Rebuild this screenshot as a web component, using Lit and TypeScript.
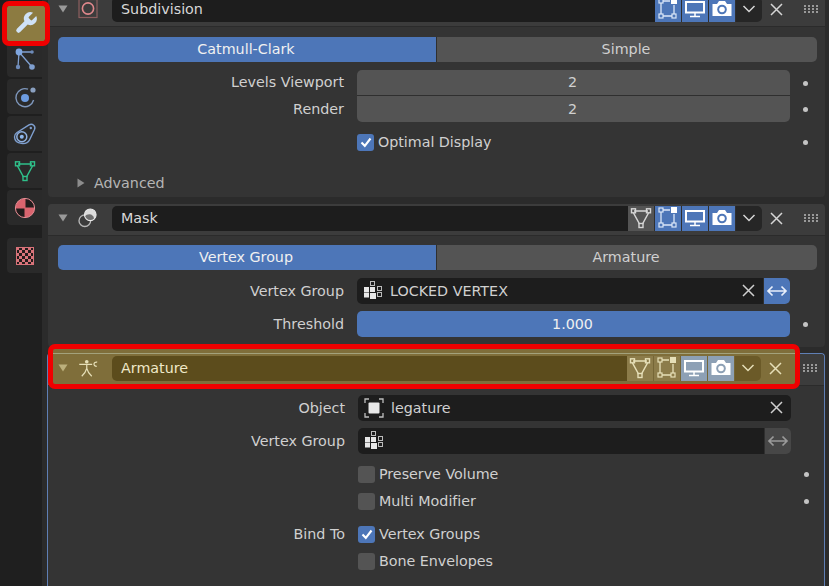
import { LitElement, html, css, svg } from "lit";
import { customElement } from "lit/decorators.js";

const ic = (w: number, h: number, c: any, cls = "") =>
  html`<svg class=${cls} width=${w} height=${h} viewBox="0 0 ${w} ${h}" fill="none">${c}</svg>`;

const wrench = html`<svg width="26" height="26" viewBox="0 0 24 24"><path fill="#cfe2f7" d="M14.7 6.3a1 1 0 0 0 0 1.4l1.6 1.6a1 1 0 0 0 1.4 0l3.77-3.77a6 6 0 0 1-7.94 7.94l-6.91 6.91a2.12 2.12 0 0 1-3-3l6.91-6.91a6 6 0 0 1 7.94-7.94l-3.76 3.76z"/></svg>`;
const particles = ic(24, 24, svg`<g stroke="#7f9fcf" stroke-width="1.3"><path d="M6 4 L19 4 M6 4 L5 19 M6 4 L19 19"/></g><circle cx="6" cy="4" r="3.4" fill="#7fa6de"/><circle cx="19" cy="4" r="1.8" fill="#6d8ab8"/><circle cx="5" cy="19" r="2.2" fill="#6d8ab8"/><circle cx="19" cy="19" r="2.8" fill="#7f9fcf"/>`);
const physics = ic(24, 24, svg`<path d="M15 4.2 A9 9 0 1 0 20.6 15" stroke="#7f98bd" stroke-width="1.4"/><circle cx="12" cy="13" r="4" fill="#6d9ce0"/><circle cx="20" cy="5" r="2.6" fill="#8aa0c0"/>`);
const constraint = ic(24, 24, svg`<path d="M4 10.5 L16 2.8 C19.5 1 23 4 21.5 7.5 L16.5 18 C14 23 2 23 1.5 15 C1.4 13 2.5 11.5 4 10.5 Z" stroke="#7fa0d0" stroke-width="1.4"/><circle cx="8.8" cy="14.8" r="5" stroke="#8fb0e0" stroke-width="1.5"/><circle cx="8.8" cy="14.8" r="2" fill="#8fb8ee"/><circle cx="17.8" cy="6" r="1.2" fill="#7f9fcf"/>`);
const dataTri = (col: string) => ic(22, 22, svg`<path d="M4 4 L18 4 M3.5 6 L9.5 17 M18.5 6 L12.5 17" stroke=${col} stroke-width="1.5"/><rect x="1.5" y="1.8" width="4" height="4" stroke=${col} stroke-width="1.4"/><rect x="16.5" y="1.8" width="4" height="4" stroke=${col} stroke-width="1.4"/><rect x="9" y="16.5" width="4" height="4" stroke=${col} stroke-width="1.4"/>`);
const material = ic(22, 22, svg`<circle cx="11" cy="11" r="9.6" fill="#d9646e"/><path d="M11.5 10.5 V1.6 A9.4 9.4 0 0 1 20.4 10.5 Z" fill="#211c1c"/><path d="M10.5 11.5 V20.4 A9.4 9.4 0 0 1 1.6 11.5 Z" fill="#211c1c"/><circle cx="11" cy="11" r="9.6" stroke="#e58d94" stroke-width="1"/>`);
const checker = () => {
  const cells = [];
  for (let y = 0; y < 6; y++) for (let x = 0; x < 6; x++) {
    cells.push(svg`<rect x=${x * 3} y=${y * 3} width="3" height="3" fill=${(x + y) % 2 ? "#241c1c" : "#d9737a"}/>`);
  }
  return ic(18, 18, svg`${cells}<rect x="0.5" y="0.5" width="17" height="17" stroke="#d9737a"/>`);
};
const subIcon = ic(20, 20, svg`<rect x="1" y="0.5" width="18" height="18" stroke="#8d5f5f" stroke-width="1.2"/><circle cx="10" cy="9.5" r="5.6" stroke="#e0888c" stroke-width="1.6"/>`);
const maskIcon = ic(22, 22, svg`<circle cx="7.5" cy="14" r="6.4" stroke="#b8b8b8" stroke-width="1.5"/><circle cx="13.5" cy="7.5" r="6.4" fill="#dcdcdc"/><path d="M7.4 9.2 A6.4 6.4 0 0 0 18 12 A7 7 0 0 0 14.5 7.2 A7 7 0 0 0 7.4 9.2 Z" fill="#6e6e6e"/><circle cx="13.5" cy="7.5" r="6.4" stroke="#e8e8e8" stroke-width="1.2"/>`);
const armIcon = (c: string) => ic(24, 24, svg`<circle cx="10.5" cy="4.5" r="2.2" fill=${c}/><path d="M1.5 7.5 H17 M10.5 7.5 V12.5 M10.5 12.5 Q9 18 4.5 22 M10.5 12.5 Q12 18 16.5 22" stroke=${c} stroke-width="1.5"/><path d="M23 5 C18.5 4.2 17.5 9.8 22.5 10" stroke=${c} stroke-width="1.4"/>`);
const vertsEdit = (c: string, sq: string) => ic(22, 22, svg`<path d="M4 5 V16 M6 3 H13 M6 18 H15 M17 7 V16" stroke=${c} stroke-width="1.3"/><rect x="2" y="1" width="4" height="4" stroke=${c} stroke-width="1.2"/><rect x="2" y="16" width="4" height="4" stroke=${c} stroke-width="1.2"/><rect x="15" y="16" width="4" height="4" stroke=${c} stroke-width="1.2"/><rect x="14" y="0" width="6" height="6" fill=${sq}/>`);
const monitor = (c: string) => ic(22, 20, svg`<rect x="2" y="3" width="18" height="10.5" stroke=${c} stroke-width="2" /><path d="M11 14 V17 M6 17.5 H16" stroke=${c} stroke-width="1.5"/>`);
const camera = (c: string, lens: string) => ic(22, 20, svg`<path d="M1.5 5 H6 L8 2 H14 L16 5 H20.5 V17 H1.5 Z" fill=${c}/><circle cx="11" cy="10.5" r="4.8" fill=${lens}/><circle cx="11" cy="10.5" r="2.8" fill=${c}/>`);
const chev = (c: string) => ic(14, 10, svg`<path d="M1.5 2 L7 7.5 L12.5 2" stroke=${c} stroke-width="1.5"/>`);
const cross = (c: string, s = 13) => ic(s, s, svg`<path d="M1 1 L${s - 1} ${s - 1} M${s - 1} 1 L1 ${s - 1}" stroke=${c} stroke-width="1.5"/>`);
const grip = () => {
  const d = [];
  for (let y = 0; y < 3; y++) for (let x = 0; x < 4; x++) d.push(svg`<rect x=${x * 4} y=${y * 3} width="2" height="2" fill="#9a9a9a"/>`);
  return ic(14, 8, d);
};
const vg = ic(20, 20, svg`<rect x="1" y="6" width="5" height="5" fill="#e8e8e8"/><rect x="1" y="11.5" width="5" height="5" fill="#e8e8e8"/><rect x="7.5" y="0.5" width="4" height="4" stroke="#bbb"/><rect x="7" y="6" width="5" height="5" fill="#e8e8e8"/><rect x="7" y="12" width="6" height="6" fill="#e8e8e8"/><rect x="14.5" y="5.5" width="4" height="4" stroke="#bbb"/><rect x="14.5" y="11.5" width="4" height="4" stroke="#bbb"/>`);
const objIcon = ic(20, 20, svg`<path d="M1 5 V1 H5 M15 1 H19 V5 M19 15 V19 H15 M5 19 H1 V15" stroke="#bdbdbd" stroke-width="1.3"/><rect x="4.5" y="4.5" width="11" height="11" rx="1" fill="#e8e8e8"/>`);
const swap = (c: string) => ic(22, 12, svg`<path d="M2 6 H20 M6.5 1.5 L2 6 L6.5 10.5 M15.5 1.5 L20 6 L15.5 10.5" stroke=${c} stroke-width="1.7"/>`);
const tri = (c: string) => ic(10, 10, svg`<path d="M0.5 1.5 H9.5 L5 8.5 Z" fill=${c}/>`);
const triR = ic(10, 10, svg`<path d="M1.5 0.5 V9.5 L8.5 5 Z" fill="#8c8c8c"/>`);
const tick = ic(12, 12, svg`<path d="M1.5 6.5 L4.8 9.8 L10.5 2.5" stroke="#fff" stroke-width="2.1"/>`);

@customElement("app-root")
export class AppRoot extends LitElement {
  static styles = css`
    :host { display: block; width: 829px; height: 586px; overflow: hidden; position: relative; background: #2b2b2b;
      font-family: "DejaVu Sans", sans-serif; font-size: 14.3px; color: #d0d0d0; }
    * { box-sizing: border-box; }
    .root { display: flex; height: 586px; }
    .side { width: 42px; flex: none; background: #1f1f1f; padding: 5px 0 0 7px; display: flex; flex-direction: column; gap: 2px; }
    .tab { height: 35px; background: #2a2a2a; border-radius: 4px 0 0 4px; display: flex; align-items: center; justify-content: center; flex: none; }
    .tab.on { height: 37px; margin-bottom: -2px; padding-bottom: 1px; background: #8c7b41; width: 38px; border-radius: 3px; }
    .tab.last { margin-top: 11px; }
    .main { flex: 1; min-width: 0; padding: 0 4px 0 6px; margin-top: -5px; display: flex; flex-direction: column; gap: 7px; }
    .panel { background: #343434; border-radius: 4px; flex: none; }
    .panel.p1 { height: 202px; }
    .panel.p2 { height: 143px; margin-bottom: -1px; }
    .panel.p3 { flex: 1; margin-left: -1px; margin-bottom: -5px; border: 1px solid #5f7fb5; border-bottom: 0; }
    .head { height: 32px; padding: 2px 0 5px 0; background: #3c3c3c; border-bottom: 1px solid #2b2b2b; border-radius: 4px 4px 0 0; display: flex; align-items: center; position: relative; }
    .arrow { width: 30px; display: flex; justify-content: center; flex: none; }
    .hicon { width: 20px; margin-right: 14px; flex: none; display: flex; justify-content: center; }
    .name { flex: 1; min-width: 0; height: 25px; background: #1d1d1d; border-radius: 5px 0 0 5px; padding-left: 9px; line-height: 25px; color: #d8d8d8; }
    .hbtn { width: 27px; height: 25px; flex: none; display: flex; align-items: center; justify-content: center; border-right: 1px solid #2f2f2f; }
    .hbtn.blue { background: #4d76b8; }
    .hbtn.gray { background: #545454; }
    .hbtn.drop { background: #262626; border-radius: 0 5px 5px 0; border-right: 0; width: 26px; }
    .x { width: 28px; flex: none; display: flex; justify-content: center; }
    .grip { width: 35px; flex: none; display: flex; justify-content: center; padding-left: 7px; }
    .body { padding: 10px 8px 0 10px; }
    .p2 .body { padding-top: 9px; }
    .seg { display: flex; height: 25px; margin-bottom: 8px; }
    .seg div { display: flex; align-items: center; justify-content: center; padding: 0 2px 1px 0; }
    .seg .a { width: 378px; background: #4d76b8; color: #f0f0f0; border-radius: 5px 0 0 5px; }
    .seg .b { flex: 1; background: #545454; border-radius: 0 5px 5px 0; border-left: 1px solid #2f2f2f; }
    .row { display: grid; grid-template-columns: 286px 433px 1fr; column-gap: 13px; align-items: center; }
    .lab { text-align: right; }
    .lab.up { padding-bottom: 2px; }
    .dot { width: 5px; height: 5px; border-radius: 50%; background: #c4c4c4; }
    .field { height: 26px; background: #1d1d1d; border-radius: 5px; display: flex; align-items: center; color: #d0d0d0; padding: 0 8px 1px 6px; }
    .field .t { flex: 1; padding-left: 7px; }
    .duo { display: flex; height: 26px; }
    .duo .field { flex: 1; border-radius: 5px 0 0 5px; }
    .duo .sw { width: 27px; display: flex; align-items: center; justify-content: center; border-radius: 0 5px 5px 0; background: #4d76b8; border-left: 1px solid #2f2f2f; }
    .duo .sw.off { background: #474747; }
    .num { height: 26px; background: #545454; display: flex; align-items: center; justify-content: center; padding: 0 2px 1px 0; }
    .num.top { border-radius: 5px 5px 0 0; border-bottom: 1px solid #2f2f2f; padding-bottom: 2px; }
    .num.bot { border-radius: 0 0 5px 5px; }
    .num.blue { background: #4d76b8; border-radius: 5px; color: #f0f0f0; }
    .chk { display: flex; align-items: center; gap: 5px; height: 18px; letter-spacing: -0.03px; }
    .box { width: 17px; height: 17px; border-radius: 3px; background: #545454; flex: none; display: flex; align-items: center; justify-content: center; margin-right: -1px; }
    .box.on { background: #4d76b8; }
    .adv { display: flex; align-items: center; gap: 8px; color: #b4b4b4; padding-left: 18px; margin-top: 22px; height: 20px; }
    .m7 { margin-bottom: 7px; } .m12 { margin-bottom: 11px; } .m9 { margin-bottom: 9px; } .m16 { margin-bottom: 15px; }
    .yel { background: linear-gradient(90deg, #7f6e3a 750px, #3c3c3c 750px); color: #ece4c0; }
    .yel .name { background: #5c4c1c; color: #efe8c8; }
    .yel .hbtn { border-right-color: #756636; }
    .yel .hbtn.g2 { background: #8c7c4a; }
    .yel .hbtn.lb { background: #8da0b5; }
    .yel .hbtn.drop { background: #6b5a28; }
    .p3 .body { padding: 9px 8px 0 11px; }
    .ring { position: absolute; border: 5px solid #f00000; pointer-events: none; }
    .ring.r1 { left: 2px; top: 1px; width: 48px; height: 45px; border-radius: 7px; }
    .ring.r2 { left: 48px; top: 344px; width: 752px; height: 45px; border-radius: 7px; background: linear-gradient(#7f6e3a 0 4px, #a3a27c 4px 5px, transparent 5px); }
  `;

  private head(icon: any, name: string, tri3 = true, yel = false) {
    const cream = "#e6dfb8";
    return html`<div class="head ${yel ? "yel" : ""}">
      <div class="arrow">${tri(yel ? "#bcb07c" : "#9a9a9a")}</div>
      <div class="hicon">${icon}</div>
      <div class="name">${name}</div>
      ${tri3 ? html`<div class="hbtn gray ${yel ? "g2" : ""}">${dataTri(yel ? cream : "#d6d6d6")}</div>` : ""}
      <div class="hbtn ${yel ? "gray g2" : "blue"}">${vertsEdit(yel ? cream : "#dbe6f7", yel ? cream : "#fff")}</div>
      <div class="hbtn ${yel ? "lb" : "blue"}">${monitor("#fff")}</div>
      <div class="hbtn ${yel ? "lb" : "blue"}">${camera("#fff", yel ? "#8da0b5" : "#4d76b8")}</div>
      <div class="hbtn drop">${chev(yel ? cream : "#d6d6d6")}</div>
      <div class="x">${cross(yel ? cream : "#d6d6d6")}</div>
      <div class="grip">${grip()}</div>
    </div>`;
  }

  render() {
    return html`<div class="root">
      <div class="side">
        <div class="tab on">${wrench}</div>
        <div class="tab">${particles}</div>
        <div class="tab">${physics}</div>
        <div class="tab">${constraint}</div>
        <div class="tab">${dataTri("#2fc08a")}</div>
        <div class="tab">${material}</div>
        <div class="tab last">${checker()}</div>
      </div>
      <div class="main">
        <div class="panel p1">
          ${this.head(subIcon, "Subdivision", false)}
          <div class="body">
            <div class="seg"><div class="a">Catmull-Clark</div><div class="b">Simple</div></div>
            <div class="row"><div class="lab up">Levels Viewport</div><div class="num top">2</div><div class="dot"></div></div>
            <div class="row m12"><div class="lab">Render</div><div class="num bot">2</div><div class="dot"></div></div>
            <div class="row"><div></div><div class="chk"><div class="box on">${tick}</div>Optimal Display</div><div class="dot"></div></div>
            <div class="adv">${triR}Advanced</div>
          </div>
        </div>
        <div class="panel p2">
          ${this.head(maskIcon, "Mask")}
          <div class="body">
            <div class="seg"><div class="a">Vertex Group</div><div class="b">Armature</div></div>
            <div class="row m7"><div class="lab">Vertex Group</div><div class="duo"><div class="field">${vg}<span class="t">LOCKED VERTEX</span>${cross("#cfcfcf")}</div><div class="sw">${swap("#e8eefa")}</div></div><div></div></div>
            <div class="row"><div class="lab">Threshold</div><div class="num blue">1.000</div><div class="dot"></div></div>
          </div>
        </div>
        <div class="panel p3">
          ${this.head(armIcon("#e6dfb8"), "Armature", true, true)}
          <div class="body">
            <div class="row m7"><div class="lab">Object</div><div class="field">${objIcon}<span class="t">legature</span>${cross("#cfcfcf")}</div><div></div></div>
            <div class="row m12"><div class="lab">Vertex Group</div><div class="duo"><div class="field">${vg}<span class="t"></span></div><div class="sw off">${swap("#9a9a9a")}</div></div><div></div></div>
            <div class="row m9"><div></div><div class="chk"><div class="box"></div>Preserve Volume</div><div class="dot"></div></div>
            <div class="row m16"><div></div><div class="chk"><div class="box"></div>Multi Modifier</div><div class="dot"></div></div>
            <div class="row m9"><div class="lab">Bind To</div><div class="chk"><div class="box on">${tick}</div>Vertex Groups</div><div></div></div>
            <div class="row"><div></div><div class="chk"><div class="box"></div>Bone Envelopes</div><div></div></div>
          </div>
        </div>
      </div>
      <div class="ring r1"></div>
      <div class="ring r2"></div>
    </div>`;
  }
}
